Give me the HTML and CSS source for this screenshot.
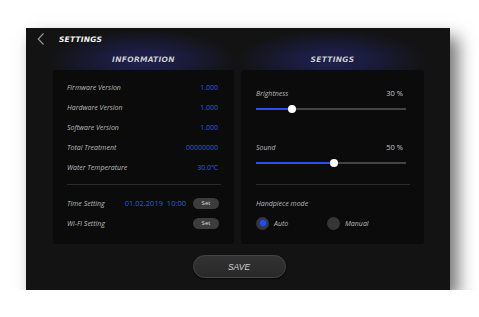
FILE: index.html
```html
<!DOCTYPE html>
<html lang="en">

<head>
    <meta charset="UTF-8">
    <meta name="viewport" content="width=device-width, initial-scale=1.0">
    <title>Settings</title>
    <link rel="stylesheet" href="styles.css">
</head>

<body>
    <div class="screen">
        <div class="topBar">
            <svg class="back" width="8" height="12" viewBox="0 0 8 12">
                <path d="M6.5 0.5 L1.2 6 L6.5 11.5" fill="none" stroke="#9a9a9a" stroke-width="1.1" />
            </svg>
            <span class="title">SETTINGS</span>
        </div>

        <div class="columns">
            <div class="column infoCol">
                <div class="colHead">INFORMATION</div>
                <div class="panel infoPanel">
                    <div class="row"><span class="label">Firmware Version</span><span class="value">1.000</span></div>
                    <div class="row"><span class="label">Hardware Version</span><span class="value">1.000</span></div>
                    <div class="row"><span class="label">Software Version</span><span class="value">1.000</span></div>
                    <div class="row"><span class="label">Total Treatment</span><span class="value">00000000</span></div>
                    <div class="row"><span class="label">Water Temperature</span><span class="value">30.0℃</span></div>
                    <div class="divider"></div>
                    <div class="row setRow">
                        <span class="label">Time Setting</span>
                        <span class="date">01.02.2019&nbsp;&nbsp;10:00</span>
                        <button class="setBtn">Set</button>
                    </div>
                    <div class="row setRow">
                        <span class="label">Wi-Fi Setting</span>
                        <button class="setBtn">Set</button>
                    </div>
                </div>
            </div>

            <div class="column setCol">
                <div class="colHead">SETTINGS</div>
                <div class="panel setPanel">
                    <div class="sliderHead"><span class="label">Brightness</span><span class="pct">30 %</span></div>
                    <div class="slider">
                        <div class="fill" style="width: 36px"></div>
                        <div class="knob" style="left: 36px"></div>
                    </div>
                    <div class="sliderHead second"><span class="label">Sound</span><span class="pct">50 %</span></div>
                    <div class="slider">
                        <div class="fill" style="width: 78px"></div>
                        <div class="knob" style="left: 78px"></div>
                    </div>
                    <div class="divider wide"></div>
                    <div class="modeLabel label">Handpiece mode</div>
                    <div class="radios">
                        <div class="radio checked"><span class="dot"></span><span class="label">Auto</span></div>
                        <div class="radio"><span class="dot"></span><span class="label">Manual</span></div>
                    </div>
                </div>
            </div>
        </div>

        <div class="footer">
            <button class="saveBtn">SAVE</button>
        </div>
    </div>
</body>

</html>
```

FILE: styles.css
```css
body {
    margin: 0;
    background: #fff;
    font-family: "Open Sans", sans-serif;
}

.screen {
    width: 424px;
    height: 262px;
    margin: 28px 0 0 26px;
    background:
        radial-gradient(ellipse 95px 30px at 117px 32px, rgba(36, 40, 120, 0.7), rgba(36, 40, 120, 0) 100%),
        radial-gradient(ellipse 95px 30px at 306px 32px, rgba(36, 40, 120, 0.7), rgba(36, 40, 120, 0) 100%),
        #131313;
    box-shadow: 8px 9px 16px rgba(0, 0, 0, 0.55);
    display: flex;
    flex-direction: column;
}

.topBar {
    height: 22px;
    display: flex;
    align-items: center;
    padding-left: 11px;
}

.title {
    margin-left: 14px;
    color: #f2f2f2;
    font-family: "DejaVu Sans", sans-serif;
    font-weight: bold;
    font-style: italic;
    font-size: 7.5px;
    letter-spacing: 0.2px;
}

.columns {
    display: flex;
    gap: 7px;
    padding-left: 27px;
}

.infoCol {
    width: 181px;
}

.setCol {
    width: 183px;
}

.colHead {
    height: 20px;
    line-height: 20px;
    text-align: center;
    color: #d0d0d8;
    font-family: "DejaVu Sans", sans-serif;
    font-weight: bold;
    font-style: italic;
    font-size: 7.5px;
    letter-spacing: 0.3px;
    text-shadow: 0 0 1px #000;
}

.panel {
    height: 174px;
    box-sizing: border-box;
    background: #0b0b0b;
    border-radius: 3px;
}

.infoPanel {
    padding: 7px 16px 0 14px;
}

.row {
    height: 20px;
    display: flex;
    align-items: center;
    justify-content: space-between;
}

.label {
    color: #bababa;
    font-style: italic;
    font-size: 7px;
}

.value {
    color: #2e58e6;
    font-size: 7px;
}

.divider {
    height: 1px;
    background: #2a2a2a;
    margin: 7px -3px 8px 0;
}

.setRow {
    justify-content: flex-start;
}

.date {
    margin-left: auto;
    margin-right: 7px;
    color: #2e58e6;
    font-size: 7.5px;
}

.setRow .setBtn {
    margin-left: auto;
}

.setRow .date + .setBtn {
    margin-left: 0;
}

.setBtn {
    width: 26px;
    height: 11px;
    margin-right: -1px;
    padding: 0;
    border: none;
    border-radius: 6px;
    background: #3c3c3c;
    color: #dcdcdc;
    font-family: "Open Sans", sans-serif;
    font-size: 6px;
    line-height: 11px;
}

.setPanel {
    padding: 17px 18px 0 15px;
}

.sliderHead {
    height: 12px;
    display: flex;
    align-items: center;
    justify-content: space-between;
    padding-right: 3px;
}

.sliderHead.second {
    margin-top: 27px;
}

.pct {
    color: #c8c8c8;
    font-size: 7.5px;
}

.slider {
    position: relative;
    height: 10px;
    margin-top: 5px;
    background: linear-gradient(#444, #444) center / 100% 2px no-repeat;
}

.fill {
    position: absolute;
    left: 0;
    top: 4px;
    height: 2px;
    background: #2a52ea;
}

.knob {
    position: absolute;
    top: 1px;
    width: 8px;
    height: 8px;
    margin-left: -4px;
    border-radius: 50%;
    background: #fff;
}

.divider.wide {
    margin: 16px -4px 0 0;
}

.modeLabel {
    margin-top: 13px;
    height: 12px;
    line-height: 12px;
}

.radios {
    display: flex;
    margin-top: 6px;
    height: 14px;
    align-items: center;
}

.radio {
    width: 71px;
    display: flex;
    align-items: center;
    gap: 5px;
}

.dot {
    width: 13px;
    height: 13px;
    border-radius: 50%;
    background: #363636;
    display: flex;
    align-items: center;
    justify-content: center;
}

.checked .dot::after {
    content: "";
    width: 6px;
    height: 6px;
    border-radius: 50%;
    background: #1f4cff;
    box-shadow: 0 0 2px #1f4cff;
}

.footer {
    display: flex;
    justify-content: center;
    margin-top: 11px;
}

.saveBtn {
    width: 93px;
    height: 23px;
    border: 1px solid #444;
    border-radius: 12px;
    background: linear-gradient(#333, #282828);
    box-shadow: 0 1px 2px rgba(0, 0, 0, 0.6);
    color: #cfcfcf;
    font-family: "Liberation Sans", sans-serif;
    font-style: italic;
    font-size: 8.5px;
    padding: 0;
    transform: translateX(1px);
}
```
